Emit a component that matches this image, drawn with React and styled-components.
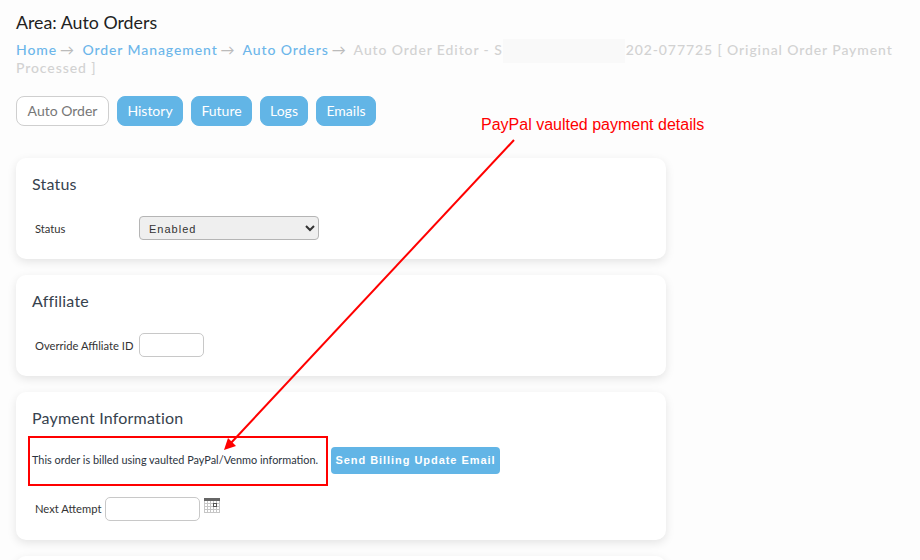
import React from "react";
import styled, { createGlobalStyle } from "styled-components";

const GlobalStyle = createGlobalStyle`
  html, body {
    margin: 0;
    height: 560px;
    overflow: hidden;
    background: #fdfdfd;
    font-family: Lato, "Liberation Sans", sans-serif;
    color: #333;
  }
`;

const Page = styled.div`
  position: relative;
  width: 920px;
  height: 560px;
  overflow: hidden;
  box-sizing: border-box;
  padding: 11px 16px 0;
`;

const AreaTitle = styled.h1`
  margin: 0;
  font-size: 17.8px;
  line-height: 22px;
  font-weight: 400;
  color: #222;
`;

const Breadcrumb = styled.div`
  margin-top: 8px;
  font-size: 14px;
  line-height: 18px;
  font-weight: 500;
  letter-spacing: 0.9px;
  color: #d2d2d2;
  white-space: nowrap;
`;

const Crumb = styled.a`
  color: #6cb6ea;
`;

const Arrow = styled.span`
  margin: 0 4px 0 3px;
  color: #bbb;
  letter-spacing: 0;
`;

const Blurred = styled.span`
  display: inline-block;
  width: 122px;
  height: 24px;
  margin: -6px 1px -6px 0;
  vertical-align: middle;
  background: #f9f9f9;
`;

const Tabs = styled.nav`
  display: flex;
  gap: 8px;
  margin-top: 19px;
`;

const Tab = styled.button`
  width: ${p => p.$width}px;
  height: 30px;
  padding: 0 0 ${p => (p.$active ? 1 : 2)}px;
  box-sizing: border-box;
  font-family: Lato, sans-serif;
  font-size: 14px;
  border-radius: 8px;
  border: 1px solid ${p => (p.$active ? "#cfcfcf" : "#62b5e6")};
  background: ${p => (p.$active ? "#fff" : "#62b5e6")};
  color: ${p => (p.$active ? "#777" : "#fff")};
`;

const Cards = styled.div`
  display: flex;
  flex-direction: column;
  gap: 16px;
  width: 650px;
  margin-top: 32px;
`;

const Card = styled.section`
  box-sizing: border-box;
  height: ${p => p.$height}px;
  flex: none;
  padding: 16px 16px 0;
  background: #fff;
  border-radius: 10px;
  box-shadow: 0 3px 10px rgba(0, 0, 0, 0.1);
`;

const CardTitle = styled.h2`
  margin: 0;
  font-size: 16px;
  line-height: 20px;
  font-weight: 400;
  color: #37424e;
  letter-spacing: 0.2px;
`;

const Row = styled.div`
  display: flex;
  align-items: center;
  margin-top: ${p => p.$top || 0}px;
  padding-left: ${p => p.$indent ?? 3}px;
`;

const Label = styled.label`
  width: ${p => p.$width}px;
  flex: none;
  padding-bottom: ${p => p.$lift || 0}px;
  font-size: 11.2px;
  color: #333;
  white-space: nowrap;
`;

const Select = styled.select`
  width: 180px;
  height: 24px;
  box-sizing: border-box;
  padding: 1px 5px 0;
  border: 1px solid #b5b5b5;
  border-radius: 4px;
  background-color: #efefef;
  font-family: "Liberation Sans", sans-serif;
  font-size: 11px;
  letter-spacing: 1px;
  color: #333;
`;

const Input = styled.input`
  width: ${p => p.$width}px;
  height: 24px;
  box-sizing: border-box;
  border: 1px solid #c8c8c8;
  border-radius: 5px;
  background: #fff;
`;

const Note = styled.span`
  width: 299px;
  flex: none;
  padding-bottom: 2px;
  font-size: 10.9px;
  color: #2c3440;
  white-space: nowrap;
`;

const SendButton = styled.button`
  height: 27px;
  width: 169px;
  padding: 0 0 2px;
  border: none;
  border-radius: 4px;
  background: #62b5e6;
  color: #fff;
  font-family: "Liberation Sans", sans-serif;
  font-size: 11px;
  font-weight: 700;
  letter-spacing: 0.95px;
`;

const CalendarIcon = styled.svg`
  width: 16px;
  height: 16px;
  margin: -6px 0 0 4px;
`;

const RedBox = styled.div`
  position: absolute;
  left: 28px;
  top: 436px;
  width: 300px;
  height: 50px;
  box-sizing: border-box;
  border: 2px solid #f00;
  pointer-events: none;
`;

const Callout = styled.div`
  position: absolute;
  left: 481px;
  top: 115px;
  font-family: "Liberation Sans", sans-serif;
  font-size: 16px;
  line-height: 20px;
  color: #f00;
`;

const ArrowLayer = styled.svg`
  position: absolute;
  left: 0;
  top: 0;
  width: 920px;
  height: 560px;
  pointer-events: none;
`;

function Calendar() {
  const lines = [];
  for (let i = 0; i <= 5; i++) lines.push(<path key={"v" + i} d={`M${0.5 + i * 3} 1V15`} />);
  for (let i = 0; i <= 3; i++) lines.push(<path key={"h" + i} d={`M0 ${5.5 + i * 3}H16`} />);
  return (
    <CalendarIcon viewBox="0 0 16 16">
      <rect x="0" y="1" width="16" height="14" fill="#fff" />
      <g stroke="#c6c6c6" strokeWidth="1" fill="none">{lines}</g>
      <rect x="0" y="0" width="16" height="3" fill="#666" />
      <rect x="9.5" y="5.5" width="3" height="3" fill="#fff" stroke="#555" />
    </CalendarIcon>
  );
}

export default function App() {
  return (
    <Page>
      <GlobalStyle />
      <AreaTitle>Area: Auto Orders</AreaTitle>
      <Breadcrumb>
        <Crumb>Home</Crumb><Arrow>→</Arrow> <Crumb>Order Management</Crumb><Arrow>→</Arrow> <Crumb>Auto Orders</Crumb><Arrow>→</Arrow> Auto Order Editor - S<Blurred />202-077725 [ Original Order Payment<br />Processed ]
      </Breadcrumb>
      <Tabs>
        <Tab $active $width={93}>Auto Order</Tab>
        <Tab $width={66}>History</Tab>
        <Tab $width={61}>Future</Tab>
        <Tab $width={48}>Logs</Tab>
        <Tab $width={60}>Emails</Tab>
      </Tabs>
      <Cards>
        <Card $height={101}>
          <CardTitle>Status</CardTitle>
          <Row $top={22}>
            <Label $width={104}>Status</Label>
            <Select defaultValue="Enabled">
              <option>Enabled</option>
              <option>Disabled</option>
            </Select>
          </Row>
        </Card>
        <Card $height={101}>
          <CardTitle>Affiliate</CardTitle>
          <Row $top={22}>
            <Label $width={104}>Override Affiliate ID</Label>
            <Input $width={65} />
          </Row>
        </Card>
        <Card $height={148}>
          <CardTitle>Payment Information</CardTitle>
          <Row $top={19} $indent={0}>
            <Note>This order is billed using vaulted PayPal/Venmo information.</Note>
            <SendButton>Send Billing Update Email</SendButton>
          </Row>
          <Row $top={23}>
            <Label $width={70} $lift={2}>Next Attempt</Label>
            <Input $width={95} />
            <Calendar />
          </Row>
        </Card>
        <Card $height={60} />
      </Cards>
      <RedBox />
      <Callout>PayPal vaulted payment details</Callout>
      <ArrowLayer viewBox="0 0 920 560">
        <path d="M514 140L230 444" stroke="#f00" strokeWidth="2" fill="none" />
        <path d="M224 450L228 438L236 446Z" fill="#f00" />
      </ArrowLayer>
    </Page>
  );
}
